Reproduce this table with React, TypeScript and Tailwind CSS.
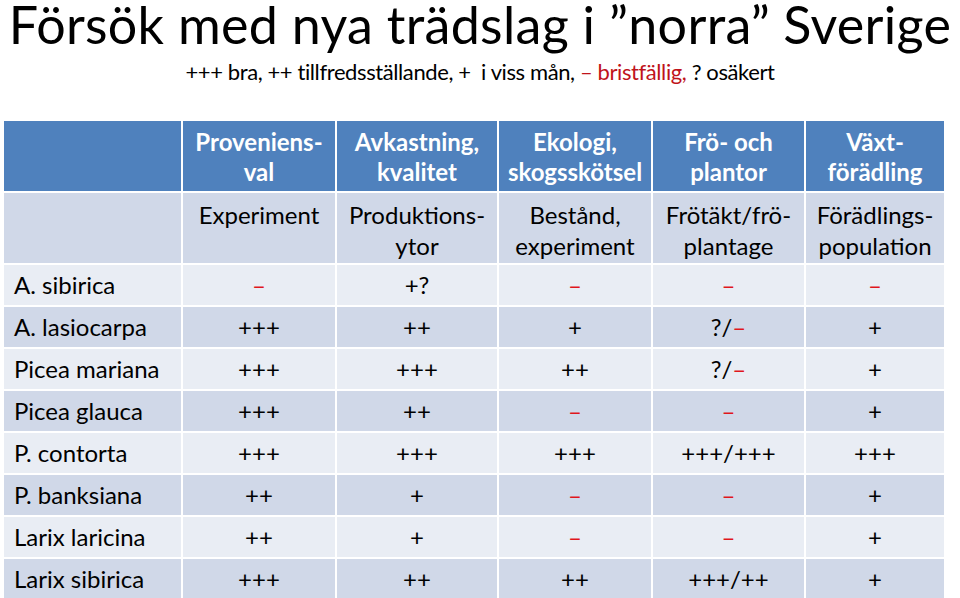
import React from "react";

type Cell = string;

const font = { fontFamily: "Lato, 'Open Sans', sans-serif" };

const headTop = ["", "Proveniens-\nval", "Avkastning,\nkvalitet", "Ekologi,\nskogsskötsel", "Frö- och\nplantor", "Växt-\nförädling"];
const headSub = ["", "Experiment", "Produktions-\nytor", "Bestånd,\nexperiment", "Frötäkt/frö-\nplantage", "Förädlings-\npopulation"];

const rows: Cell[][] = [
  ["A. sibirica", "–", "+?", "–", "–", "–"],
  ["A. lasiocarpa", "+++", "++", "+", "?/–", "+"],
  ["Picea mariana", "+++", "+++", "++", "?/–", "+"],
  ["Picea glauca", "+++", "++", "–", "–", "+"],
  ["P. contorta", "+++", "+++", "+++", "+++/+++", "+++"],
  ["P. banksiana", "++", "+", "–", "–", "+"],
  ["Larix laricina", "++", "+", "–", "–", "+"],
  ["Larix sibirica", "+++", "++", "++", "+++/++", "+"],
];

// render a value, colouring the "–" marks red
function Mark({ value }: { value: string }) {
  const parts = value.split(/(–)/);
  return (
    <>
      {parts.map((p, i) =>
        p === "–" ? (
          <span key={i} className="text-[#e0161c]">
            –
          </span>
        ) : (
          <span key={i}>{p}</span>
        ),
      )}
    </>
  );
}

export default function App() {
  return (
    <div className="w-[960px] h-[598px] bg-white overflow-hidden text-black" style={font}>
      <h1 className="text-center text-[52px] leading-[62px] whitespace-nowrap tracking-[0.3px] h-[50px] -mt-[3px]">
        <span className="relative -top-[4px]">Försök med nya trädslag i ”norra” Sverige</span>
      </h1>
      <p className="text-center text-[22px] leading-[26px] mt-[12px] tracking-[-0.4px]">
        +++ bra, ++ tillfredsställande, +&nbsp; i viss mån,{" "}
        <span className="text-[#c0131b]">– bristfällig,</span> ? osäkert
      </p>

      <div className="ml-[4px] mt-[36px] grid grid-cols-[177px_152px_160px_152px_151px_138px] grid-rows-[70px_70px] auto-rows-[40px] gap-[2px] text-[24px]">
        {headTop.map((h, i) => (
          <div
            key={"t" + i}
            className="bg-[#4f81bd] text-white font-bold flex items-center justify-center text-center pt-[2px] leading-[30px] whitespace-pre-line"
          >
            {h}
          </div>
        ))}
        {headSub.map((h, i) => (
          <div
            key={"s" + i}
            className="bg-[#d0d8e8] flex items-start justify-center text-center pt-[6px] leading-[31px] whitespace-pre-line"
          >
            {h}
          </div>
        ))}
        {rows.map((r, ri) =>
          r.map((c, ci) => (
            <div
              key={ri + "-" + ci}
              className={
                (ri % 2 === 0 ? "bg-[#e9edf4] " : "bg-[#d0d8e8] ") +
                (ci === 0 ? "pl-[10px] justify-start " : "justify-center ") +
                "flex items-center leading-none"
              }
            >
              <Mark value={c} />
            </div>
          )),
        )}
      </div>
    </div>
  );
}
